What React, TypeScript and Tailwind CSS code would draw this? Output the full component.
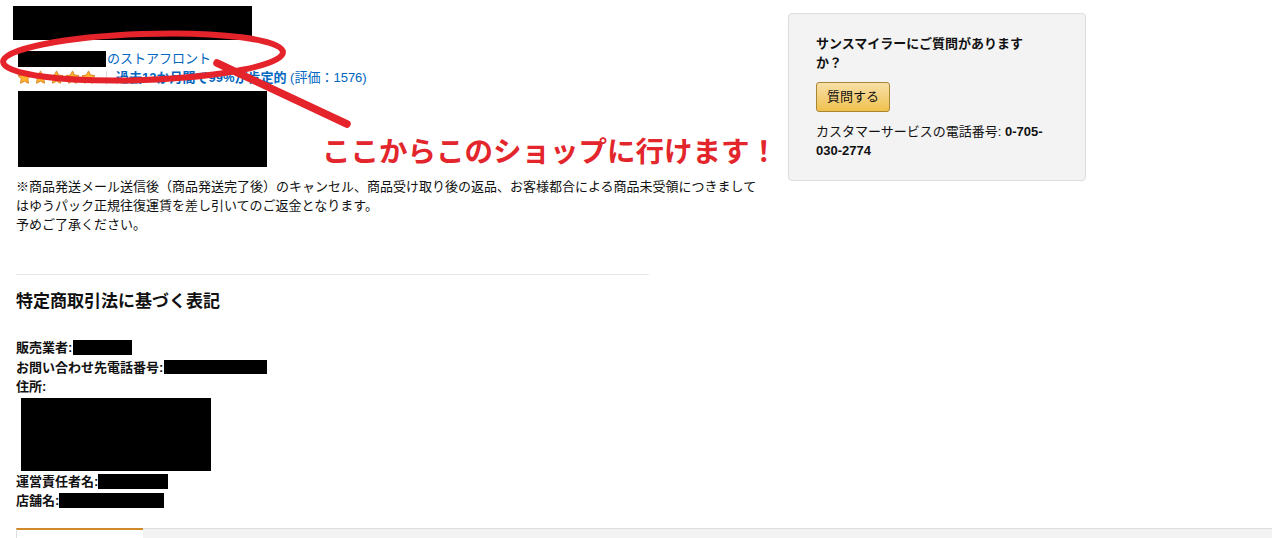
import React from "react";

const Star = () => (
  <svg width="15" height="15" viewBox="0 0 24 24" className="shrink-0">
    <path
      d="M12 1.5l3.2 6.5 7.2 1-5.2 5.1 1.2 7.1L12 17.8l-6.4 3.4 1.2-7.1L1.6 9l7.2-1L12 1.5z"
      fill="#ffb52e"
      stroke="#d9801f"
      strokeWidth="1.5"
      strokeLinejoin="round"
    />
  </svg>
);

function Redacted({ className }: { className: string }) {
  return <span className={`inline-block bg-black align-middle ${className}`} />;
}

function InfoRow({ label, children }: { label: string; children?: React.ReactNode }) {
  return (
    <div className="flex items-center h-[19.5px] text-[13px] font-bold text-[#111]">
      <span>{label}</span>
      {children}
    </div>
  );
}

export default function App() {
  return (
    <div className="relative w-[1272px] h-[538px] overflow-hidden bg-white flex flex-col font-['Liberation_Sans','Noto_Sans_CJK_JP',sans-serif] text-[#111]">
      <div className="flex items-start pl-4 pt-[6px]">
        {/* left column */}
        <div className="w-[750px] flex flex-col">
          <div className="-ml-[3px] w-[239px] h-[34px] bg-black" />

          <div className="mt-[9px] h-[19px] flex items-center text-[13px] text-[#0066c0]">
            <Redacted className="ml-[2px] w-[88px] h-[16px]" />
            <span className="ml-[1px]">のストアフロント</span>
          </div>

          <div className="h-[19px] flex items-center text-[13px]">
            <div className="ml-[1px] flex gap-[1px]">
              <Star />
              <Star />
              <Star />
              <Star />
              <Star />
            </div>
            <span className="ml-[10px] w-px h-[14px] bg-[#ddd]" />
            <span className="ml-[9px] text-[#0066c0]">
              <span className="font-semibold">過去12か月間で99%が肯定的</span> (評価：1576)
            </span>
          </div>

          <div className="mt-[4px] ml-[2px] w-[249px] h-[76px] bg-black" />

          <p className="mt-[10px] text-[13px] leading-[19px]">
            ※商品発送メール送信後（商品発送完了後）のキャンセル、商品受け取り後の返品、お客様都合による商品未受領につきましてはゆうパック正規往復運賃を差し引いてのご返金となります。
            <br />
            予めご了承ください。
          </p>

          <div className="mt-[40px] w-[633px] h-px bg-[#e7e7e7]" />

          <h2 className="mt-[15px] text-[17px] leading-[24px] font-bold">特定商取引法に基づく表記</h2>

          <div className="mt-[24px] flex flex-col">
            <InfoRow label="販売業者:">
              <Redacted className="ml-[1px] w-[59px] h-[15px]" />
            </InfoRow>
            <InfoRow label="お問い合わせ先電話番号:">
              <Redacted className="ml-[1px] w-[103px] h-[14px]" />
            </InfoRow>
            <InfoRow label="住所:" />
            <div className="mt-[1px] ml-[5px] w-[190px] h-[73px] bg-black" />
            <div className="mt-[1px]">
              <InfoRow label="運営責任者名:">
                <Redacted className="w-[70px] h-[15px]" />
              </InfoRow>
            </div>
            <InfoRow label="店舗名:">
              <Redacted className="w-[105px] h-[15px]" />
            </InfoRow>
          </div>
        </div>

        {/* right column */}
        <div className="ml-[22px] mt-[7px] w-[298px] h-[168px] rounded-[4px] border border-[#ddd] bg-[#f3f3f3] pl-[27px] pt-[19.5px]">
          <h3 className="w-[215px] text-[13px] leading-[19px] font-bold">サンスマイラーにご質問がありますか？</h3>
          <button className="mt-[10.5px] w-[74px] h-[30px] rounded-[3px] border border-[#a88734] bg-gradient-to-b from-[#f7dfa5] to-[#f0c14b] text-[13px] text-[#111]">
            質問する
          </button>
          <p className="mt-[10px] w-[235px] text-[13px] leading-[19px]">
            カスタマーサービスの電話番号:&nbsp;<span className="font-bold">0-705-030-2774</span>
          </p>
        </div>
      </div>

      {/* tab strip */}
      <div className="mt-auto h-[10px] flex">
        <div className="w-4" />
        <div className="w-[127px] border-t-2 border-t-[#d08a2c] border-l border-l-[#ddd] bg-white" />
        <div className="flex-1 border-t border-t-[#ddd] bg-[#f3f3f3]" />
      </div>

      {/* annotation overlay */}
      <svg className="absolute inset-0 pointer-events-none" width="1272" height="538">
        <ellipse
          cx="143"
          cy="57"
          rx="140"
          ry="23"
          fill="none"
          stroke="#e5232b"
          strokeWidth="6"
          transform="rotate(-2 143 57)"
        />
        <line x1="217" y1="63" x2="347" y2="124" stroke="#e5232b" strokeWidth="7.5" strokeLinecap="round" />
      </svg>
      <div className="absolute left-[322px] top-[133px] text-[28.5px] leading-[38px] font-bold text-[#e3262b] whitespace-nowrap">
        ここからこのショップに行けます！
      </div>
    </div>
  );
}
